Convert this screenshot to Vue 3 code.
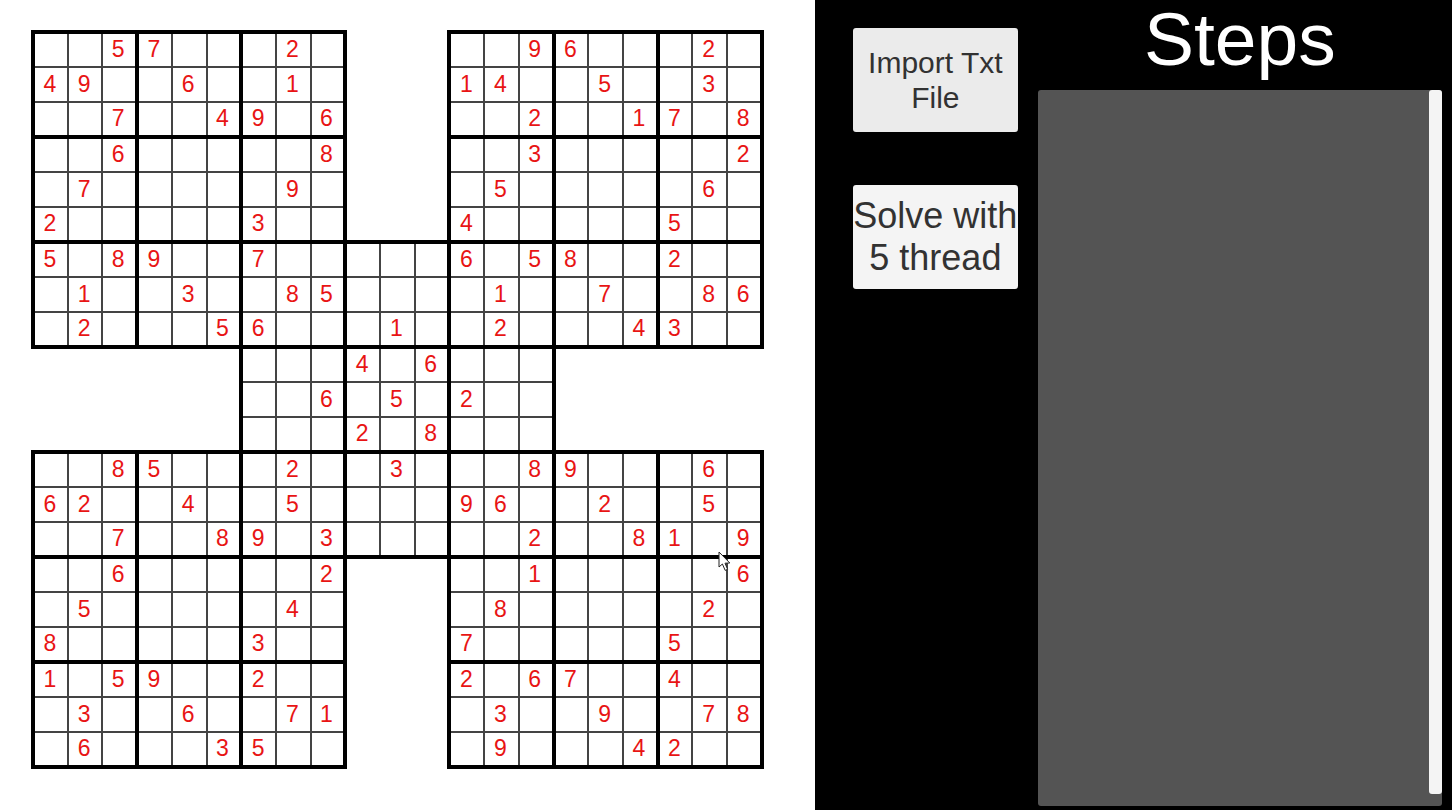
<script setup>
const rows = [
  '..57...2.   ..96...2.',
  '49..6..1.   14..5..3.',
  '..7..49.6   ..2..17.8',
  '..6.....8   ..3.....2',
  '.7.....9.   .5.....6.',
  '2.....3..   4.....5..',
  '5.89..7.....6.58..2..',
  '.1..3..85....1..7..86',
  '.2...56...1..2...43..',
  '      ...4.6...      ',
  '      ..6.5.2..      ',
  '      ...2.8...      ',
  '..85...2..3...89...6.',
  '62..4..5....96..2..5.',
  '..7..89.3.....2..81.9',
  '..6.....2   ..1.....6',
  '.5.....4.   .8.....2.',
  '8.....3..   7.....5..',
  '1.59..2..   2.67..4..',
  '.3..6..71   .3..9..78',
  '.6...35..   .9...42..'
].map((row) => [...row])

function cellClass(ch, r, c) {
  if (ch === ' ') return 'blank'
  return [
    'cell',
    {
      top: r % 3 === 0,
      bottom: r % 3 === 2,
      left: c % 3 === 0,
      right: c % 3 === 2
    }
  ]
}
</script>

<template>
  <div class="app">
    <main class="board">
      <div class="sheet">
        <table aria-label="Samurai sudoku">
          <tbody>
            <tr v-for="(row, r) in rows" :key="r">
              <td v-for="(ch, c) in row" :key="c" :class="cellClass(ch, r, c)">{{ ch > '0' ? ch : '' }}</td>
            </tr>
          </tbody>
        </table>
        <svg class="cursor" viewBox="0 0 13 21" aria-hidden="true">
          <path d="M1 1 L1 16 L4.4 13 L7.2 19.4 L9.6 18.3 L7 12.2 L11.8 12 Z" fill="#fff" stroke="#222" stroke-width="1" stroke-linejoin="round" />
        </svg>
      </div>
    </main>
    <aside class="side">
      <div class="actions">
        <button type="button" class="import">Import Txt<br>File</button>
        <button type="button" class="solve">Solve with<br>5 thread</button>
      </div>
      <section class="steps" aria-labelledby="steps-title">
        <h1 id="steps-title">Steps</h1>
        <div class="log">
          <div class="thumb"></div>
        </div>
      </section>
    </aside>
  </div>
</template>

<style>
body {
  margin: 0;
}
</style>

<style scoped>
.app {
  display: grid;
  grid-template-columns: 815fr 637fr;
  min-height: 100vh;
  font-family: "Liberation Sans", Arial, sans-serif;
  background: #fff;
}
.board {
  padding: 30px 51px 0 31px;
}
.sheet {
  position: relative;
}
table {
  width: 100%;
  table-layout: fixed;
  border-collapse: collapse;
}
tr {
  height: 35px;
}
td {
  box-sizing: border-box;
  height: 35px;
  padding: 0 2px 2px 0;
  font-size: 23px;
  line-height: 24px;
  text-align: center;
  vertical-align: middle;
  color: #e81414;
}
.cell {
  border: 2px solid #444;
}
.cell.top {
  border-top: 4px solid #000;
}
.cell.bottom {
  border-bottom: 4px solid #000;
}
.cell.left {
  border-left: 4px solid #000;
}
.cell.right {
  border-right: 4px solid #000;
}
.cursor {
  position: absolute;
  left: 93.7%;
  top: 70.5%;
  width: 13px;
  height: 21px;
}
.side {
  display: flex;
  gap: 20px;
  padding: 0 10px 4px 38px;
  background: #000;
}
.actions {
  display: flex;
  flex-direction: column;
  gap: 53px;
  flex: 165 1 0;
  padding-top: 28px;
}
button {
  height: 104px;
  padding: 0;
  border: 0;
  border-radius: 3px;
  font-family: inherit;
  color: #323232;
  white-space: nowrap;
}
.import {
  background: #ebebeb;
  font-size: 30px;
  line-height: 35px;
}
.solve {
  background: #f4f4f4;
  font-size: 36px;
  line-height: 42px;
}
.steps {
  display: flex;
  flex-direction: column;
  flex: 405 1 0;
}
h1 {
  margin: 0;
  height: 90px;
  font-size: 75px;
  line-height: 78px;
  font-weight: 400;
  text-align: center;
  color: #fff;
}
.log {
  flex: 1;
  display: flex;
  justify-content: flex-end;
  padding-bottom: 12px;
  border-radius: 3px;
  background: #545454;
}
.thumb {
  width: 13px;
  border-radius: 3px;
  background: #f4f4f4;
}
</style>
